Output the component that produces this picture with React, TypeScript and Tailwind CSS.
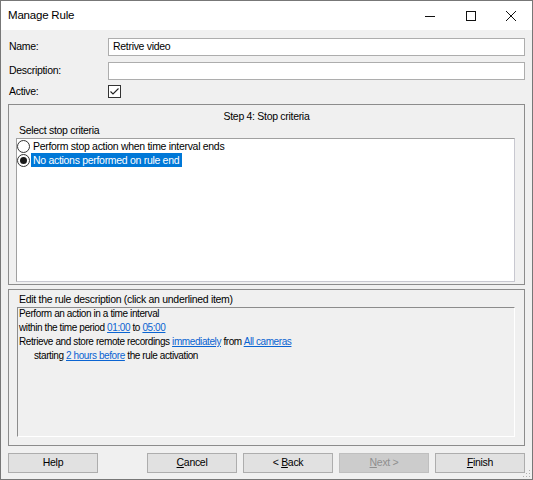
import React from "react";

const font = { fontFamily: '"Liberation Sans", Arial, sans-serif' };

function Radio({ checked }: { checked?: boolean }) {
  return (
    <svg width="13" height="13" viewBox="0 0 13 13" className="shrink-0">
      <circle cx="6.5" cy="6.5" r="6" fill="#fff" stroke="#333" strokeWidth="1" />
      {checked && <circle cx="6.5" cy="6.5" r="3.5" fill="#1a1a1a" />}
    </svg>
  );
}

function Btn({ children, disabled }: { children: React.ReactNode; disabled?: boolean }) {
  return (
    <div
      className={
        "w-[90px] h-[20px] flex items-center justify-center border " +
        (disabled
          ? "bg-[#cccccc] border-[#bfbfbf] text-[#8f8f8f]"
          : "bg-[#e1e1e1] border-[#adadad] text-black")
      }
    >
      {children}
    </div>
  );
}

function Link({ children }: { children: React.ReactNode }) {
  return <span className="text-[#0a64d2] underline underline-offset-[1px]">{children}</span>;
}

export default function App() {
  return (
    <div
      className="relative w-[533px] h-[480px] flex flex-col border border-[#777777] bg-[#f0f0f0] text-black text-[10.5px] tracking-[-0.3px] overflow-hidden"
      style={font}
    >
      {/* Title bar */}
      <div className="h-[29px] bg-white flex items-center shrink-0">
        <div className="pl-[7px] text-[11.5px] tracking-[-0.2px] leading-none flex-1">Manage Rule</div>
        <div className="w-[41px] h-full flex items-center justify-center">
          <svg width="10" height="10" viewBox="0 0 10 10">
            <line x1="0" y1="5.5" x2="10" y2="5.5" stroke="#111" strokeWidth="1" />
          </svg>
        </div>
        <div className="w-[41px] h-full flex items-center justify-center">
          <svg width="10" height="10" viewBox="0 0 10 10">
            <rect x="0.5" y="0.5" width="9" height="9" fill="none" stroke="#111" strokeWidth="1" />
          </svg>
        </div>
        <div className="w-[41px] h-full flex items-center justify-center pr-[2px]">
          <svg width="10" height="10" viewBox="0 0 10 10">
            <path d="M0 0 L10 10 M10 0 L0 10" stroke="#111" strokeWidth="1" />
          </svg>
        </div>
      </div>

      {/* Body */}
      <div className="flex flex-col px-[7px] pt-[8px] flex-1">
        <div className="flex items-center h-[18px]">
          <div className="w-[100px] pl-[1px]">Name:</div>
          <div className="flex-1 h-full border border-[#adadad] bg-white flex items-center pl-[4px]">
            Retrive video
          </div>
        </div>
        <div className="flex items-center h-[18px] mt-[6px]">
          <div className="w-[100px] pl-[1px]">Description:</div>
          <div className="flex-1 h-full border border-[#adadad] bg-white" />
        </div>
        <div className="flex items-center h-[13px] mt-[5px]">
          <div className="w-[100px] pl-[1px]">Active:</div>
          <div className="w-[13px] h-[13px] border border-[#333] bg-white flex items-center justify-center">
            <svg width="11" height="11" viewBox="0 0 11 11">
              <path d="M1.5 5.5 L4 8 L9.5 2.5" fill="none" stroke="#222" strokeWidth="1.1" />
            </svg>
          </div>
        </div>

        {/* Step panel */}
        <div className="mt-[6px] h-[181px] border border-[#8c8c8c] flex flex-col">
          <div className="pt-[4px] leading-[14px] text-center">Step 4: Stop criteria</div>
          <div className="leading-[15px] pl-[10px]">Select stop criteria</div>
          <div className="ml-[7px] mr-[9px] h-[144px] bg-white border border-t-[#a0a0a0] border-l-[#a0a0a0] border-r-[#c8c8d0] border-b-[#c8c8d0] flex flex-col">
            <div className="flex items-center h-[14px]">
              <Radio />
              <span className="ml-[2px] px-[1px] leading-[14px]">Perform stop action when time interval ends</span>
            </div>
            <div className="flex items-center h-[14px]">
              <Radio checked />
              <span className="ml-[1px] pl-[2px] pr-[3px] leading-[14px] bg-[#0078d7] text-white">
                No actions performed on rule end
              </span>
            </div>
          </div>
        </div>

        {/* Description panel */}
        <div className="mt-[4px] h-[157px] border border-[#8c8c8c] flex flex-col">
          <div className="leading-[16px] pl-[10px] pt-[1px]">Edit the rule description (click an underlined item)</div>
          <div className="ml-[8px] mr-[9px] h-[130px] border border-t-[#8c8c8c] border-l-[#8c8c8c] border-r-[#ffffff] border-b-[#ffffff] flex flex-col pl-[1px] leading-[14px] text-[10px] tracking-[-0.4px]">
            <div className="-mt-[1px]">Perform an action in a time interval</div>
            <div>
              within the time period <Link>01:00</Link> to <Link>05:00</Link>
            </div>
            <div>
              Retrieve and store remote recordings <Link>immediately</Link> from <Link>All cameras</Link>
            </div>
            <div className="pl-[15px]">
              starting <Link>2 hours before</Link> the rule activation
            </div>
          </div>
        </div>

        {/* Buttons */}
        <div className="mt-[7px] flex items-center">
          <Btn>Help</Btn>
          <div className="flex-1" />
          <div className="flex gap-[6px]">
            <Btn>
              <span><span className="underline">C</span>ancel</span>
            </Btn>
            <Btn>
              <span>&lt; <span className="underline">B</span>ack</span>
            </Btn>
            <Btn disabled>
              <span><span className="underline">N</span>ext &gt;</span>
            </Btn>
            <Btn>
              <span><span className="underline">F</span>inish</span>
            </Btn>
          </div>
        </div>
      </div>

      {/* Resize grip */}
      <svg className="absolute right-[1px] bottom-[1px]" width="8" height="8" viewBox="0 0 8 8">
        <rect x="6" y="0" width="1" height="1" fill="#b0b0b0" />
        <rect x="3" y="3" width="1" height="1" fill="#b0b0b0" />
        <rect x="6" y="3" width="1" height="1" fill="#b0b0b0" />
        <rect x="0" y="6" width="1" height="1" fill="#b0b0b0" />
        <rect x="3" y="6" width="1" height="1" fill="#b0b0b0" />
        <rect x="6" y="6" width="1" height="1" fill="#b0b0b0" />
      </svg>
    </div>
  );
}
